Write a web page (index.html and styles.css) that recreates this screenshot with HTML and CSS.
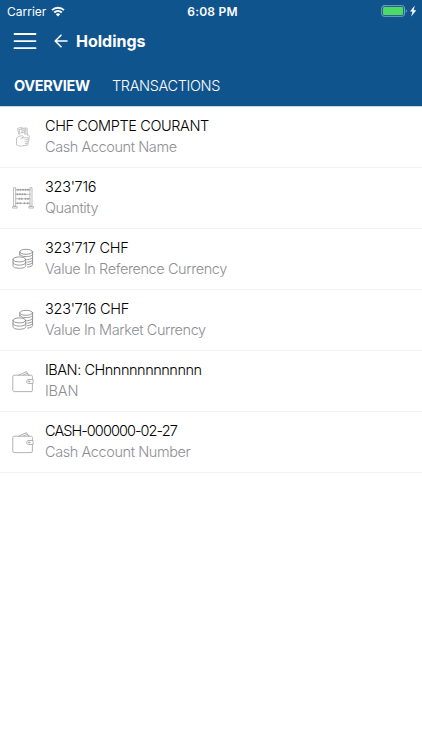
FILE: index.html
```html
<!DOCTYPE html>
<html lang="en">

<head>
    <meta charset="UTF-8">
    <meta name="viewport" content="width=device-width, initial-scale=1.0">
    <title>Holdings</title>
    <link rel="stylesheet" href="styles.css">
</head>

<body>
    <!-- Shared icons -->
    <svg class="sprite" aria-hidden="true">
        <symbol id="coins" viewBox="0 0 22 22">
            <ellipse cx="14.2" cy="3.8" rx="6.4" ry="2.5" />
            <path d="M7.8 3.8v3.4M20.6 3.8v12.7c0 1.3-2 2.3-5 2.6M7.8 6.2c.5 1.6 3 2.4 6.4 2.4 3.8 0 6.4-1 6.4-2.500M20.6 9c0 1.4-2 2.4-5 2.6M20.6 11.6c0 1.4-2 2.3-5 2.5M20.6 14.1c0 1.4-2 2.3-5 2.5" />
            <ellipse cx="7.4" cy="11.4" rx="6.4" ry="2.5" />
            <path d="M1 11.4v6.3c0 1.5 2.8 2.6 6.4 2.6s6.4-1.1 6.4-2.6v-6.3M1 14.5c0 1.5 2.8 2.6 6.4 2.6s6.4-1.1 6.4-2.6" />
        </symbol>
        <symbol id="wallet" viewBox="0 0 22 22">
            <path d="M20.4 8.3V5.600c0-1-.5-1.400-1.400-1.400H2.200c-.9 0-1.400.5-1.400 1.400v13.600c0 .9.500 1.400 1.400 1.400H19c.9 0 1.400-.5 1.400-1.400v-6.600M6.500 4.200L14.500.6l1.900 3.600M11.500 4.100l3.500-2.100 2.400 2.200M16.800 8.500h4.300v4h-4.300c-3 0-3-4 0-4z" />
            <circle cx="17.1" cy="10.5" r=".7" />
        </symbol>
    </svg>

    <header class="header">
        <div class="status-bar">
            <div class="carrier">
                <span>Carrier</span>
                <svg class="wifi" viewBox="0 0 14 11">
                    <path d="M1 4.2a8.6 8.6 0 0 1 12 0M3.2 6.5a5.5 5.5 0 0 1 7.6 0" />
                    <path class="dot" d="M4.8 8.2a3.2 3.2 0 0 1 4.4 0L7 10.4z" />
                </svg>
            </div>
            <span class="time">6:08 PM</span>
            <div class="power">
                <svg viewBox="0 0 36 12">
                    <rect class="case" x=".7" y=".7" width="22.8" height="10.6" rx="2.4" />
                    <rect class="charge" x="2" y="2" width="20.2" height="8" rx="1.2" />
                    <path class="cap" d="M24.8 4.2c1.500.6 1.500 3 0 3.600z" />
                    <path class="bolt" d="M33.800.6L29 6.600h2.500l-1.300 4.900L35.300 5.200h-2.700z" />
                </svg>
            </div>
        </div>

        <div class="nav-bar">
            <svg class="menu" viewBox="0 0 24 18">
                <path d="M1.5 2h21M1.5 9.1h21M1.5 16.2h21" />
            </svg>
            <svg class="back" viewBox="0 0 14 14">
                <path d="M13 7H1.200M7 1.200L1.200 7 7 12.800" />
            </svg>
            <h1 class="title">Holdings</h1>
        </div>

        <nav class="tabs">
            <a class="tab tab-overview">OVERVIEW</a>
            <a class="tab">TRANSACTIONS</a>
        </nav>
    </header>

    <ul class="list">
        <li class="item">
            <svg class="icon faint" viewBox="0 0 22 22">
                <path d="M6.800 8.300L5.600 2.500l3.700-1.300 1 1 4.800-.2.300 7.300M8 8L7 3.700l2.300-.7M9.300 3l4.500 0 .1 5.500M9.300 3l1.200 2 2.500-.6-.8 2.200 1 2M10.500 5L8.900 6.700l3.300-.1M4.500 13c.5-2.200 2.800-3.300 5.700-3.200 1.300 0 1.200 1.600.2 2l-1.600.8M4.500 13v5.800c2.200 1.500 5 1.800 7.300.7M10.400 11.800h5.800c1.400 0 1.400 2 0 2h-3.300M16 13.800c1.400 0 1.300 2 0 2h-3M15.700 15.800c1.300 0 1.100 1.900 0 1.900h-2.500M15 17.700c1.100 0 .9 1.800-.2 1.800h-3M16.800 12l.7-1.600-1.300-1.700" />
            </svg>
            <div class="text">
                <div class="value v-name">CHF COMPTE COURANT</div>
                <div class="label">Cash Account Name</div>
            </div>
        </li>
        <li class="item">
            <svg class="icon abacus" viewBox="0 0 22 22">
                <path d="M2 .7h1.700v18.500H2zM18.300.7H20v18.500h-1.700zM.6 20.700v-1.200h4.500v1.200zM16.900 20.700v-1.200h4.500v1.200zM3.700 2.800h14.600M3.700 7.300h14.600M3.700 11.800h14.600M3.700 16.300h14.600" />
                <path class="beads" d="M6 2.800h.01M8.500 2.800h.01M11 2.800h.01M13.500 2.800h.01M16 2.800h.01M5.500 7.300h.01M7.900 7.300h.01M10.400 7.300h.01M13 7.300h.01M7.300 11.800h.01M9.700 11.800h.01M13.500 11.800h.01M16 11.800h.01M5.600 16.300h.01M8.500 16.300h.01M12.600 16.300h.01M15.800 16.300h.01" />
            </svg>
            <div class="text">
                <div class="value">323'716</div>
                <div class="label">Quantity</div>
            </div>
        </li>
        <li class="item">
            <svg class="icon coins"><use href="#coins" /></svg>
            <div class="text">
                <div class="value">323'717 CHF</div>
                <div class="label">Value In Reference Currency</div>
            </div>
        </li>
        <li class="item">
            <svg class="icon coins"><use href="#coins" /></svg>
            <div class="text">
                <div class="value">323'716 CHF</div>
                <div class="label">Value In Market Currency</div>
            </div>
        </li>
        <li class="item">
            <svg class="icon wallet"><use href="#wallet" /></svg>
            <div class="text">
                <div class="value v-iban">IBAN: CHnnnnnnnnnnnn</div>
                <div class="label l-iban">IBAN</div>
            </div>
        </li>
        <li class="item">
            <svg class="icon wallet"><use href="#wallet" /></svg>
            <div class="text">
                <div class="value v-number">CASH-000000-02-27</div>
                <div class="label">Cash Account Number</div>
            </div>
        </li>
    </ul>
</body>

</html>
```
FILE: styles.css
```css
body {
    margin: 0;
    background-color: #fff;
    font-family: Inter, "Liberation Sans", sans-serif;
}

svg {
    display: block;
    fill: none;
    stroke-linecap: round;
    stroke-linejoin: round;
}

.sprite {
    display: none;
}

/* Header */
.header {
    height: 106px;
    border-bottom: 1px solid #c3d5e3;
    background-color: #10548e;
    background-clip: padding-box;
    color: #fff;
}

.status-bar {
    display: grid;
    grid-template-columns: 1fr auto 1fr;
    align-items: center;
    height: 22px;
    padding: 0 5px 0 7px;
    font-size: 12px;
}

.carrier {
    display: flex;
    align-items: center;
    gap: 5px;
}

.wifi {
    width: 14px;
    height: 11px;
    stroke: #fff;
    stroke-width: 1.8;
    stroke-linecap: butt;
}

.wifi .dot {
    fill: #fff;
    stroke: none;
}

.time {
    padding-left: 1px;
    font-weight: 600;
    letter-spacing: 0.2px;
}

.power {
    justify-self: end;
    width: 36px;
}

.case {
    stroke: #7fa3c4;
}

.charge {
    fill: #4cd964;
}

.cap {
    fill: #7fa3c4;
}

.bolt {
    fill: #fff;
}

.nav-bar {
    display: flex;
    align-items: center;
    height: 38px;
    padding-left: 13px;
}

.menu {
    width: 24px;
    height: 18px;
    stroke: #fff;
    stroke-width: 1.8;
}

.back {
    width: 14px;
    height: 14px;
    margin-left: 17px;
    stroke: #fff;
    stroke-width: 1.6;
}

.title {
    margin: 0 0 0 8px;
    font-size: 16px;
    font-weight: 700;
}

.tabs {
    display: flex;
    gap: 22px;
    padding-left: 14px;
    line-height: 52px;
    font-size: 14.5px;
    font-weight: 300;
    letter-spacing: -0.37px;
    white-space: nowrap;
}

.tab-overview {
    width: 76px;
    font-weight: 700;
    letter-spacing: -0.3px;
}

/* Holdings list */
.list {
    margin: 0;
    padding: 0;
    list-style: none;
}

.item {
    display: flex;
    box-sizing: border-box;
    height: 61px;
    padding: 9px 0 0 12px;
    border-bottom: 1px solid #f2f2f2;
}

.icon {
    width: 22px;
    height: 22px;
    margin: 10px 11px 0 0;
    stroke: #aaa;
    stroke-width: 0.9;
}

.faint {
    stroke: #a8a8a8;
    stroke-width: 0.65;
}

.coins {
    stroke: #8c8c8c;
}

.abacus {
    stroke: #a0a0a0;
    stroke-width: 0.7;
}

.wallet {
    margin-top: 11px;
}

.beads {
    stroke-width: 2.1;
}

.text {
    font-size: 14.5px;
    font-weight: 300;
    line-height: 20px;
    white-space: nowrap;
}

.value {
    color: #000;
    letter-spacing: -0.28px;
}

.v-name {
    letter-spacing: -0.39px;
}

.v-iban {
    letter-spacing: -0.46px;
}

.v-number {
    letter-spacing: -0.94px;
}

.label {
    padding-top: 1px;
    color: #8e8e93;
    letter-spacing: -0.41px;
}

.l-iban {
    letter-spacing: -0.2px;
}
```
